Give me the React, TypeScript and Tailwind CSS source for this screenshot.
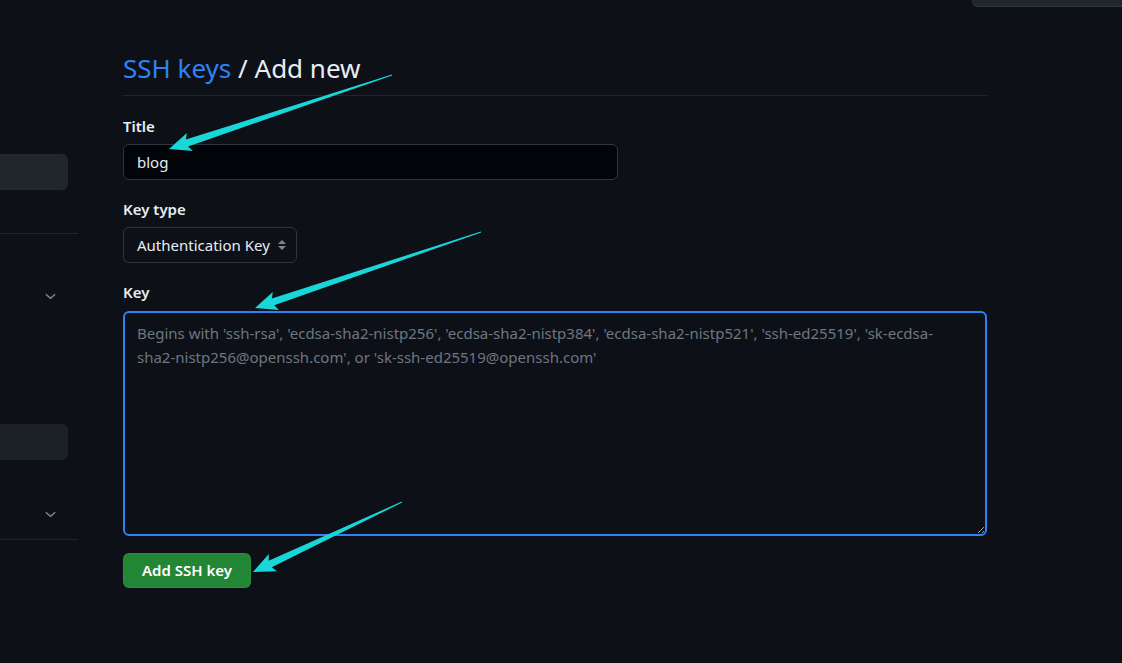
import React from 'react';

type Pt = [number, number];

function Arrow({ tail, tip }: { tail: Pt; tip: Pt }) {
  const dx = tip[0] - tail[0];
  const dy = tip[1] - tail[1];
  const len = Math.hypot(dx, dy);
  const ux = dx / len;
  const uy = dy / len;
  const nx = -uy;
  const ny = ux;
  const head = 19;
  const neck = 3.6;
  const wing = 9.5;
  const bx = tip[0] - ux * head;
  const by = tip[1] - uy * head;
  // barbs sit a bit further back than the neck
  const wx = tip[0] - ux * (head + 3);
  const wy = tip[1] - uy * (head + 3);
  const pts: Pt[] = [
    [tail[0] + nx * 0.5, tail[1] + ny * 0.5],
    [bx + nx * neck, by + ny * neck],
    [wx + nx * wing, wy + ny * wing],
    tip,
    [wx - nx * wing, wy - ny * wing],
    [bx - nx * neck, by - ny * neck],
    [tail[0] - nx * 0.5, tail[1] - ny * 0.5],
  ];
  return <polygon points={pts.map((p) => p.join(',')).join(' ')} fill="#19d6d8" />;
}

function Label({ children }: { children: React.ReactNode }) {
  return <label className="block text-[15px] font-semibold leading-[22px] text-[#e6edf3]">{children}</label>;
}

function Chevron() {
  return (
    <svg width="15" height="15" viewBox="0 0 16 16" fill="none" stroke="#7d8590" strokeWidth="1.5">
      <path d="M3 5.5l5 4.5 5-4.5" />
    </svg>
  );
}

export default function App() {
  return (
    <div
      className="relative flex min-h-screen h-[663px] overflow-hidden bg-[#0d1117] text-[#e6edf3]"
      style={{ fontFamily: '"Noto Sans", "Open Sans", Arial, sans-serif' }}
    >
      {/* top right corner of a header control */}
      <div className="absolute right-0 top-0 h-[7px] w-[150px] rounded-bl-md border-b border-l border-[#30363d] bg-[#21262d]" />

      {/* Sidebar (cut off on the left) */}
      <aside className="w-[78px] shrink-0 pt-[154px]">
        <div className="-ml-3 h-9 w-[80px] rounded-md bg-[#21262d]" />
        <div className="mt-[43px] h-px bg-[#21262d]" />
        <div className="flex h-[126px] items-start justify-end pr-[20px] pt-[55px]">
          <Chevron />
        </div>
        <div className="mt-[64px] -ml-3 h-9 w-[80px] rounded-md bg-[#1c2128]" />
        <div className="flex h-[79px] items-start justify-end pr-[20px] pt-[47px]">
          <Chevron />
        </div>
        <div className="h-px bg-[#21262d]" />
      </aside>

      {/* Main */}
      <main className="ml-[45px] w-[864px] pt-[48px]">
        <h1 className="border-b border-[#21262d] pb-[7px] text-[26px] font-normal leading-[40px]">
          <span className="text-[#2f81f7]">SSH keys</span> / Add new
        </h1>

        <div className="mt-[19px]">
          <Label>Title</Label>
          <div className="mt-[7px] flex h-9 w-[495px] items-center rounded-md border border-[#30363d] bg-[#010409] px-[13px] text-[15px]">
            blog
          </div>
        </div>

        <div className="mt-[18px]">
          <Label>Key type</Label>
          <div className="mt-[7px] flex h-9 w-[174px] items-center justify-between rounded-md border border-[#30363d] bg-[#0d1117] pl-[13px] pr-[9px] text-[15px]">
            <span>Authentication Key</span>
            <svg width="10" height="12" viewBox="0 0 10 12" fill="#7d8590">
              <path d="M5 1L9 5H1z" />
              <path d="M5 11L1 7h8z" />
            </svg>
          </div>
        </div>

        <div className="mt-[18px]">
          <Label>Key</Label>
          <textarea
            className="mt-[8px] block h-[225px] w-full resize-y rounded-md border-2 border-[#2f81f7] bg-[#0d1117] px-3 py-[8px] text-[15px] leading-[24px] text-[#e6edf3] outline-none [color-scheme:dark] placeholder:text-[#6e7681]"
            placeholder={
              "Begins with 'ssh-rsa', 'ecdsa-sha2-nistp256', 'ecdsa-sha2-nistp384', 'ecdsa-sha2-nistp521', 'ssh-ed25519', 'sk-ecdsa-\nsha2-nistp256@openssh.com', or 'sk-ssh-ed25519@openssh.com'"
            }
          />
        </div>

        <button className="mt-[17px] h-[35px] rounded-md border border-[#2ea043]/40 bg-[#238636] px-[18px] text-[15px] font-semibold text-white">
          Add SSH key
        </button>
      </main>

      {/* annotation arrows */}
      <svg className="pointer-events-none absolute inset-0" width="1122" height="663">
        <Arrow tail={[392, 75]} tip={[169, 149]} />
        <Arrow tail={[481, 232]} tip={[255, 308]} />
        <Arrow tail={[402, 502]} tip={[253, 572]} />
      </svg>
    </div>
  );
}
